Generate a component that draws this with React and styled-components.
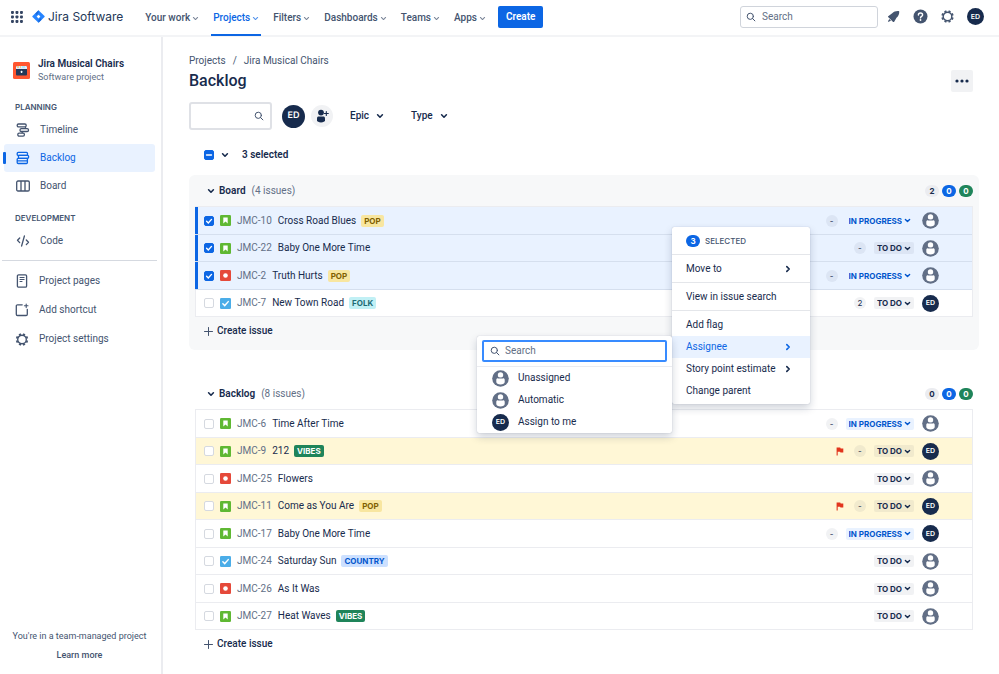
import React from 'react'
import styled, { createGlobalStyle } from 'styled-components'

const board = [
  { id: 'JMC-10', type: 'story', title: 'Cross Road Blues', epic: 'POP', points: '-', status: 'IN PROGRESS', selected: true },
  { id: 'JMC-22', type: 'story', title: 'Baby One More Time', points: '-', status: 'TO DO', selected: true },
  { id: 'JMC-2', type: 'bug', title: 'Truth Hurts', epic: 'POP', points: '-', status: 'IN PROGRESS', selected: true },
  { id: 'JMC-7', type: 'task', title: 'New Town Road', epic: 'FOLK', points: '2', status: 'TO DO', mine: true },
]

const backlog = [
  { id: 'JMC-6', type: 'story', title: 'Time After Time', points: '-', status: 'IN PROGRESS' },
  { id: 'JMC-9', type: 'story', title: '212', epic: 'VIBES', points: '-', status: 'TO DO', mine: true, flagged: true },
  { id: 'JMC-25', type: 'bug', title: 'Flowers', status: 'TO DO' },
  { id: 'JMC-11', type: 'story', title: 'Come as You Are', epic: 'POP', points: '-', status: 'TO DO', mine: true, flagged: true },
  { id: 'JMC-17', type: 'story', title: 'Baby One More Time', points: '-', status: 'IN PROGRESS', mine: true },
  { id: 'JMC-24', type: 'task', title: 'Saturday Sun', epic: 'COUNTRY', status: 'TO DO' },
  { id: 'JMC-26', type: 'bug', title: 'As It Was', status: 'TO DO' },
  { id: 'JMC-27', type: 'story', title: 'Heat Waves', epic: 'VIBES', status: 'TO DO' },
]

const epicColors = {
  POP: ['#f8e6a0', '#7f5f01'],
  FOLK: ['#c1f0f5', '#1d6b74'],
  VIBES: ['#1f845a', '#ffffff'],
  COUNTRY: ['#cce0ff', '#0055cc'],
}

/* ---------- icons ---------- */

const Chevron = ({ size = 8, width = 2, right }) => (
  <svg width={size} height={size} viewBox="0 0 10 10" fill="none" stroke="currentColor" strokeWidth={width} strokeLinecap="round" strokeLinejoin="round" aria-hidden="true">
    <path d={right ? 'M3.5 2 6.5 5 3.5 8' : 'M2 3.5 5 6.5 8 3.5'} />
  </svg>
)

const SearchIcon = () => (
  <svg width="10" height="10" viewBox="0 0 10 10" fill="none" stroke="#44546f" strokeWidth="1" strokeLinecap="round" aria-hidden="true">
    <circle cx="4.3" cy="4.3" r="3.1" />
    <path d="M6.6 6.6 8.9 8.9" />
  </svg>
)

const SwitcherIcon = () => (
  <svg width="12" height="12" viewBox="0 0 12 12" fill="#344563" aria-hidden="true">
    {[0, 4.5, 9].map((y) => [0, 4.5, 9].map((x) => <rect key={`${x}-${y}`} x={x} y={y} width="2.9" height="2.9" rx="0.8" />))}
  </svg>
)

const JiraLogo = () => (
  <svg width="13" height="13" viewBox="0 0 13 13" aria-hidden="true">
    <path d="M6.5.3 12.500 6.100c.3.300.3.600 0 .900L6.500 12.800.5 7c-.3-.3-.3-.6 0-.9z" fill="#2684ff" />
    <path d="M6.500.3v2.500L4.500 5 3.400 3.400z" fill="#1868db" />
    <path d="M6.500 12.800v-2.500l2-2.200 1.100 1.600z" fill="#1868db" />
    <path d="M6.500 4.700 8.400 6.500 6.500 8.400 4.600 6.500z" fill="#fff" />
  </svg>
)

const RocketIcon = () => (
  <svg width="13" height="13" viewBox="0 0 13 13" fill="#44546f" aria-hidden="true">
    <path d="M12.200 1.200C9.500.8 7 1.500 5.200 3.200L1.200 6.200c-.4.400-.2.900.2 1.100l4.700 4.600c.3.300.9.300 1.100-.2l2.300-4C11.500 6 12.500 3.800 12.200 1.200z" />
    <path d="M2.300 9 1 11.300c-.2.400.1.700.5.500L4 10.700z" />
  </svg>
)

const HelpIcon = () => (
  <svg width="15" height="15" viewBox="0 0 15 15" aria-hidden="true">
    <circle cx="7.500" cy="7.500" r="7" fill="#44546f" />
    <path d="M5.400 6c0-1.200.9-2 2.100-2s2.100.8 2.100 1.900c0 1.500-2.100 1.500-2.100 3" fill="none" stroke="#fff" strokeWidth="1.400" strokeLinecap="round" />
    <circle cx="7.500" cy="11" r="0.900" fill="#fff" />
  </svg>
)

const GearIcon = () => (
  <svg width="13" height="13" viewBox="0 0 13 13" fill="none" stroke="#44546f" aria-hidden="true">
    <circle cx="6.500" cy="6.500" r="4.300" strokeWidth="1.400" />
    {[22.5, 67.5, 112.5, 157.5, 202.5, 247.5, 292.5, 337.5].map((a) => (
      <path key={a} d="M6.500 0.300v1.700" strokeWidth="2.200" transform={`rotate(${a} 6.500 6.500)`} />
    ))}
  </svg>
)

const PersonIcon = () => (
  <svg width="17" height="17" viewBox="0 0 17 17" aria-hidden="true">
    <circle cx="8.500" cy="8.500" r="8.300" fill="#626f86" />
    <circle cx="8.500" cy="5" r="2.700" fill="#fff" />
    <path d="M4.300 9.800c0-.9.600-1.500 1.500-1.500h5.400c.9 0 1.500.6 1.500 1.500v2.100c0 1.400-1.800 2.500-4.200 2.500s-4.200-1.100-4.200-2.500z" fill="#fff" />
    <path d="M5.800 8h5.400" stroke="#626f86" strokeWidth="0.700" />
  </svg>
)

const AddPersonIcon = () => (
  <svg width="14" height="14" viewBox="0 0 14 14" fill="#172b4d" aria-hidden="true">
    <circle cx="6" cy="3.600" r="2.900" />
    <path d="M2 9.200c0-1 .7-1.700 1.700-1.700h4.600c1 0 1.700.7 1.700 1.700v2c0 1.300-1.800 2.200-4 2.200s-4-.9-4-2.200z" />
    <path d="M11.300 2.500v4M9.300 4.500h4" stroke="#172b4d" strokeWidth="1.100" strokeLinecap="round" />
  </svg>
)

const ProjectIcon = () => (
  <svg width="17" height="17" viewBox="0 0 17 17" aria-hidden="true">
    <rect width="17" height="17" rx="1.500" fill="#ff5630" />
    <rect x="3" y="4" width="11" height="9.500" rx="1" fill="#253858" />
    <path d="M4 4h9a1 1 0 0 1 1 1v2H3V5a1 1 0 0 1 1-1z" fill="#deebff" />
    <path d="M4 5h2M7 5h1" stroke="#ffab00" strokeWidth="0.900" />
    <path d="M9 5h3" stroke="#79e2f2" strokeWidth="0.900" />
    <rect x="7.800" y="8.800" width="1.500" height="2.200" rx="0.500" fill="#fff" />
  </svg>
)

const TimelineIcon = () => (
  <svg width="14" height="14" viewBox="0 0 14 14" fill="none" stroke="currentColor" strokeWidth="1.300" aria-hidden="true">
    <rect x="1.200" y="1" width="9" height="2.900" rx="1.300" />
    <rect x="4" y="5.600" width="8.500" height="2.900" rx="1.300" />
    <rect x="1.800" y="10.200" width="6.600" height="2.900" rx="1.300" />
    <path d="M9.500 3.900v1.700M6.200 8.500v1.700" />
  </svg>
)

const BacklogIcon = () => (
  <svg width="14" height="14" viewBox="0 0 14 14" fill="none" stroke="currentColor" strokeWidth="1.300" aria-hidden="true">
    <rect x="1.200" y="1.400" width="10.300" height="3" rx="1" />
    <rect x="2.400" y="4.400" width="10.200" height="2.900" rx="1" />
    <path d="M2.200 7.300h9.200v4.200a1 1 0 0 1-1 1H2.200a1 1 0 0 1-1-1V8.300a1 1 0 0 1 1-1zM1.200 9.900h10.200" />
  </svg>
)

const BoardIcon = () => (
  <svg width="14" height="14" viewBox="0 0 14 14" fill="none" stroke="currentColor" strokeWidth="1.300" aria-hidden="true">
    <rect x="0.700" y="2" width="12.600" height="10" rx="1.300" />
    <path d="M5 2v10M9 2v10" />
  </svg>
)

const CodeIcon = () => (
  <svg width="14" height="14" viewBox="0 0 14 14" fill="none" stroke="currentColor" strokeWidth="1.300" strokeLinecap="round" strokeLinejoin="round" aria-hidden="true">
    <path d="M3.700 4 1.500 6.300l2.200 2.300M10.300 6l2.200 2.300-2.200 2.300M8.400 2 5.600 12" />
  </svg>
)

const PageIcon = () => (
  <svg width="14" height="14" viewBox="0 0 14 14" fill="none" stroke="currentColor" strokeWidth="1.300" aria-hidden="true">
    <rect x="2.400" y="0.800" width="9.200" height="12.400" rx="1.200" />
    <path d="M4.600 3.500h4.900M4.600 5.500h4.900M4.600 7.500h2.800" strokeWidth="1.100" />
  </svg>
)

const ShortcutIcon = () => (
  <svg width="14" height="14" viewBox="0 0 14 14" fill="none" stroke="currentColor" strokeWidth="1.300" strokeLinecap="round" aria-hidden="true">
    <path d="M7.200 1.800H2.500a1.200 1.200 0 0 0-1.200 1.200v8.300a1.200 1.200 0 0 0 1.200 1.200h8.600a1.200 1.200 0 0 0 1.200-1.200V6.500" />
    <path d="M11.200 1v3.600M9.400 2.800H13" strokeWidth="1.100" />
  </svg>
)

const FlagIcon = () => (
  <svg width="8" height="9" viewBox="0 0 8 9" fill="#e2351d" aria-hidden="true">
    <path d="M.6.600h3.600l.5.800h2.600v4.200H4.500l-.5-.8H1.700v3.700H.6z" />
  </svg>
)

const PlusIcon = () => (
  <svg width="9" height="9" viewBox="0 0 9 9" stroke="#44546f" strokeWidth="1" strokeLinecap="round" aria-hidden="true">
    <path d="M4.500.5v8M.5 4.500h8" />
  </svg>
)

const DotsIcon = () => (
  <svg width="14" height="4" viewBox="0 0 14 4" fill="#172b4d" aria-hidden="true">
    <circle cx="2" cy="2" r="1.600" />
    <circle cx="7" cy="2" r="1.600" />
    <circle cx="12" cy="2" r="1.600" />
  </svg>
)

const TypeIcon = ({ type }) => (
  <svg width="11" height="11" viewBox="0 0 10 10" role="img" aria-label={type}>
    {type === 'story' && (
      <>
        <rect width="10" height="10" rx="1.200" fill="#5fb833" />
        <path d="M3 2.200h4v5.600L5 6 3 7.800z" fill="#fff" />
      </>
    )}
    {type === 'bug' && (
      <>
        <rect width="10" height="10" rx="1.200" fill="#e5493a" />
        <circle cx="5" cy="5" r="2.100" fill="#fff" />
      </>
    )}
    {type === 'task' && (
      <>
        <rect width="10" height="10" rx="1.200" fill="#4bade8" />
        <path d="M2.600 5.200 4.300 6.900 7.500 3.300" fill="none" stroke="#fff" strokeWidth="1.300" strokeLinecap="round" />
      </>
    )}
  </svg>
)

/* ---------- components ---------- */

const Assignee = ({ mine }) => (mine ? <Initials>ED</Initials> : <PersonIcon />)

const Issue = ({ issue }) => (
  <Row $selected={issue.selected} $flagged={issue.flagged}>
    <Checkbox type="checkbox" defaultChecked={issue.selected} aria-label={`Select ${issue.id}`} />
    <TypeIcon type={issue.type} />
    <IssueKey href="#">{issue.id}</IssueKey>
    <Summary>{issue.title}</Summary>
    {issue.epic && <Epic $colors={epicColors[issue.epic]}>{issue.epic}</Epic>}
    <RowEnd>
      {issue.flagged && <Flag><FlagIcon /></Flag>}
      {issue.points && <Points>{issue.points}</Points>}
      <StatusBox $progress={issue.status === 'IN PROGRESS'}>
        <StatusSelect defaultValue={issue.status} aria-label={`Status of ${issue.id}`}>
          <option>TO DO</option>
          <option>IN PROGRESS</option>
          <option>DONE</option>
        </StatusSelect>
        <Chevron size={7} />
      </StatusBox>
      <Assignee mine={issue.mine} />
    </RowEnd>
  </Row>
)

const IssueSection = ({ title, issues, total, filled, children }) => (
  <Section $filled={filled}>
    <SectionHead>
      <Chevron />
      <h2>{title}</h2>
      <span>({issues.length} issues)</span>
      <Counts>
        <Count>{total}</Count>
        <Count $color="#0c66e4">0</Count>
        <Count $color="#1f845a">0</Count>
      </Counts>
    </SectionHead>
    <List>
      {issues.map((issue) => (
        <Issue key={issue.id} issue={issue} />
      ))}
    </List>
    <CreateIssue>
      <PlusIcon />
      Create issue
    </CreateIssue>
    {children}
  </Section>
)

const BulkMenu = () => (
  <Menu>
    <MenuHead>
      <Count $color="#0c66e4">3</Count>
      SELECTED
    </MenuHead>
    <MenuGroup>
      <MenuItem>Move to <Chevron right /></MenuItem>
    </MenuGroup>
    <MenuGroup>
      <MenuItem>View in issue search</MenuItem>
    </MenuGroup>
    <MenuGroup>
      <MenuItem>Add flag</MenuItem>
      <SubmenuAnchor>
        <MenuItem $active>Assignee <Chevron right /></MenuItem>
        <Submenu>
          <SubmenuSearch>
            <SearchIcon />
            <input type="text" placeholder="Search" aria-label="Search assignee" />
          </SubmenuSearch>
          <People>
            <Person><PersonIcon />Unassigned</Person>
            <Person><PersonIcon />Automatic</Person>
            <Person><Initials>ED</Initials>Assign to me</Person>
          </People>
        </Submenu>
      </SubmenuAnchor>
      <MenuItem>Story point estimate <Chevron right /></MenuItem>
      <MenuItem>Change parent</MenuItem>
    </MenuGroup>
  </Menu>
)

const App = () => {
  return (
    <Page>
      <GlobalStyle />
      <TopBar>
        <IconButton aria-label="Switch to"><SwitcherIcon /></IconButton>
        <Brand href="#">
          <JiraLogo />
          Jira Software
        </Brand>
        <Nav>
          {['Your work', 'Projects', 'Filters', 'Dashboards', 'Teams', 'Apps'].map((name) => (
            <NavButton key={name} $active={name === 'Projects'}>
              {name}
              <Chevron size={7} width={1.5} />
            </NavButton>
          ))}
        </Nav>
        <CreateButton>Create</CreateButton>
        <TopEnd>
          <TopSearch>
            <SearchIcon />
            <input type="text" placeholder="Search" aria-label="Search" />
          </TopSearch>
          <IconButton aria-label="Notifications"><RocketIcon /></IconButton>
          <IconButton aria-label="Help"><HelpIcon /></IconButton>
          <IconButton aria-label="Settings"><GearIcon /></IconButton>
          <Initials>ED</Initials>
        </TopEnd>
      </TopBar>
      <Body>
        <Sidebar>
          <Project>
            <ProjectIcon />
            <div>
              <ProjectName>Jira Musical Chairs</ProjectName>
              <ProjectKind>Software project</ProjectKind>
            </div>
          </Project>
          <GroupTitle>PLANNING</GroupTitle>
          <SideLink href="#"><TimelineIcon />Timeline</SideLink>
          <SideLink href="#" $active><BacklogIcon />Backlog</SideLink>
          <SideLink href="#"><BoardIcon />Board</SideLink>
          <GroupTitle>DEVELOPMENT</GroupTitle>
          <SideLink href="#"><CodeIcon />Code</SideLink>
          <Extras>
            <SideLink href="#"><PageIcon />Project pages</SideLink>
            <SideLink href="#"><ShortcutIcon />Add shortcut</SideLink>
            <SideLink href="#"><GearIcon />Project settings</SideLink>
          </Extras>
          <SideFooter>
            <p>You're in a team-managed project</p>
            <a href="#">Learn more</a>
          </SideFooter>
        </Sidebar>
        <Main>
          <PageHead>
            <div>
              <Breadcrumbs>
                <a href="#">Projects</a>
                <span>/</span>
                <a href="#">Jira Musical Chairs</a>
              </Breadcrumbs>
              <Title>Backlog</Title>
            </div>
            <MoreButton aria-label="More actions"><DotsIcon /></MoreButton>
          </PageHead>
          <Filters>
            <FilterSearch>
              <input type="text" aria-label="Search backlog" />
              <SearchIcon />
            </FilterSearch>
            <Initials $large>ED</Initials>
            <AddPeople aria-label="Add people"><AddPersonIcon /></AddPeople>
            <FilterButton aria-haspopup="true">Epic <Chevron /></FilterButton>
            <FilterButton aria-haspopup="true">Type <Chevron /></FilterButton>
          </Filters>
          <Selection>
            <Checkbox type="checkbox" $mixed aria-label="Select all issues" />
            <Chevron />
            3 selected
          </Selection>
          <IssueSection title="Board" issues={board} total={2} filled>
            <BulkMenu />
          </IssueSection>
          <IssueSection title="Backlog" issues={backlog} total={0} />
        </Main>
      </Body>
    </Page>
  )
}

/* ---------- styles ---------- */

const labelFont = 'Inter, "Liberation Sans", sans-serif'

const GlobalStyle = createGlobalStyle`
  * {
    box-sizing: border-box;
    margin: 0;
    padding: 0;
  }
  body {
    background: #ffffff;
    color: #172b4d;
    font: 400 10px/14px Roboto, "Liberation Sans", sans-serif;
  }
  button, input, select {
    font: inherit;
    color: inherit;
    border: none;
    background: none;
  }
  button {
    cursor: pointer;
  }
  a {
    color: inherit;
    text-decoration: none;
  }
  svg {
    display: block;
    flex-shrink: 0;
  }
`;

const Page = styled.div`
  display: flex;
  flex-direction: column;
  min-height: 100vh;
`;

const TopBar = styled.header`
  display: flex;
  align-items: center;
  height: 37px;
  padding: 0 15px 2px 11px;
  border-bottom: 2px solid #f3f4f6;
`;

const IconButton = styled.button`
  display: flex;
  align-items: center;
  justify-content: center;
`;

const Brand = styled.a`
  display: flex;
  align-items: center;
  gap: 3px;
  margin-left: 9px;
  color: #253858;
  font-family: ${labelFont};
  font-size: 12px;
`;

const Nav = styled.nav`
  display: flex;
  gap: 10px;
  margin-left: 20px;
  align-self: stretch;
`;

const NavButton = styled.button`
  display: flex;
  align-items: center;
  gap: 2px;
  padding: 2px 2px 0;
  margin-bottom: -3px;
  border-bottom: 2px solid ${(p) => (p.$active ? '#0c66e4' : 'transparent')};
  color: ${(p) => (p.$active ? '#0c66e4' : '#44546f')};
  font-weight: 500;
  svg {
    opacity: 0.7;
  }
`;

const CreateButton = styled.button`
  height: 22px;
  margin-left: 10px;
  padding: 0 8px;
  border-radius: 2px;
  background: #0c66e4;
  color: #ffffff;
  font-weight: 600;
`;

const TopEnd = styled.div`
  display: flex;
  align-items: center;
  gap: 13px;
  margin-left: auto;
`;

const TopSearch = styled.label`
  display: flex;
  align-items: center;
  gap: 6px;
  width: 138px;
  height: 22px;
  padding: 0 5px;
  margin-right: -4px;
  border: 1px solid #d0d4db;
  border-radius: 3px;
  input {
    flex: 1;
    min-width: 0;
    outline: none;
  }
  input::placeholder {
    color: #626f86;
    opacity: 1;
  }
`;

const Initials = styled.span`
  display: flex;
  align-items: center;
  justify-content: center;
  flex-shrink: 0;
  width: ${(p) => (p.$large ? 23 : 17)}px;
  height: ${(p) => (p.$large ? 23 : 17)}px;
  border-radius: 50%;
  background: #172b4d;
  color: #ffffff;
  font-family: ${labelFont};
  font-size: ${(p) => (p.$large ? 9 : 7)}px;
  font-weight: 600;
  text-rendering: geometricPrecision;
`;

const Body = styled.div`
  display: flex;
  flex: 1;
`;

const Sidebar = styled.aside`
  display: flex;
  flex-direction: column;
  flex-shrink: 0;
  width: 163px;
  padding: 20px 6px 16px 4px;
  border-right: 2px solid #ebecf0;
  color: #44546f;
`;

const Project = styled.div`
  display: flex;
  align-items: center;
  gap: 8px;
  padding-left: 9px;
  margin-bottom: 18px;
`;

const ProjectName = styled.p`
  color: #172b4d;
  font-weight: 600;
`;

const ProjectKind = styled.p`
  color: #626f86;
  font-size: 9px;
  line-height: 13px;
`;

const GroupTitle = styled.h3`
  padding-left: 11px;
  margin-bottom: 9px;
  font-family: ${labelFont};
  font-size: 8px;
  line-height: 10px;
  font-weight: 600;
  a + & {
    margin-top: 13px;
  }
`;

const SideLink = styled.a`
  display: flex;
  align-items: center;
  gap: 10px;
  height: 28px;
  padding-left: 12px;
  border-radius: 3px;
  position: relative;
  background: ${(p) => (p.$active ? '#e9f2ff' : 'none')};
  color: ${(p) => (p.$active ? '#0c66e4' : '#44546f')};
  svg {
    width: 14px;
  }
  ${GroupTitle} + & {
    margin-top: -5px;
  }
  &::before {
    content: "";
    display: ${(p) => (p.$active ? 'block' : 'none')};
    position: absolute;
    left: -1px;
    top: 8px;
    bottom: 8px;
    width: 3px;
    border-radius: 1px;
    background: #0c66e4;
  }
`;

const Extras = styled.div`
  display: grid;
  gap: 1px;
  margin: 5px -2px 0 -2px;
  padding-top: 6px;
  border-top: 1px solid #d5d9e0;
  ${SideLink} {
    padding-left: 13px;
  }
`;

const SideFooter = styled.footer`
  display: grid;
  gap: 5px;
  margin-top: auto;
  text-align: center;
  font-size: 9px;
  line-height: 14px;
  a {
    font-weight: 500;
  }
`;

const Main = styled.main`
  flex: 1;
  min-width: 0;
  padding: 17px 20px 15px 26px;
`;

const PageHead = styled.div`
  display: flex;
  justify-content: space-between;
  align-items: flex-end;
  padding-right: 6px;
`;

const Breadcrumbs = styled.nav`
  display: flex;
  gap: 7px;
  color: #44546f;
`;

const Title = styled.h1`
  margin-top: 2px;
  font-size: 16px;
  line-height: 22px;
  font-weight: 500;
`;

const MoreButton = styled.button`
  display: flex;
  align-items: center;
  justify-content: center;
  width: 22px;
  height: 22px;
  border-radius: 2px;
  background: #f1f2f4;
`;

const Filters = styled.div`
  display: flex;
  align-items: center;
  margin-top: 10px;
`;

const FilterSearch = styled.label`
  display: flex;
  align-items: center;
  width: 83px;
  height: 28px;
  padding: 0 6px;
  margin-right: 10px;
  border: 2px solid #dfe1e6;
  border-radius: 3px;
  input {
    flex: 1;
    min-width: 0;
    outline: none;
  }
`;

const AddPeople = styled.button`
  display: flex;
  align-items: center;
  justify-content: center;
  width: 22px;
  height: 22px;
  margin: 0 9px 0 6px;
  border-radius: 50%;
  background: #f1f2f4;
`;

const FilterButton = styled.button`
  display: flex;
  align-items: center;
  gap: 7px;
  padding: 0 8px;
  margin-right: 11px;
  font-weight: 500;
`;

const Selection = styled.div`
  display: flex;
  align-items: center;
  height: 20px;
  margin: 15px 0 10px;
  padding-left: 15px;
  font-weight: 600;
  svg {
    margin: 0 13px 0 7px;
  }
`;

const tick = `url("data:image/svg+xml,%3Csvg xmlns='http://www.w3.org/2000/svg' viewBox='0 0 10 10'%3E%3Cpath d='M2.600 5.200 4.300 6.900 7.500 3.400' fill='none' stroke='white' stroke-width='1.400' stroke-linecap='round'/%3E%3C/svg%3E")`
const dash = `url("data:image/svg+xml,%3Csvg xmlns='http://www.w3.org/2000/svg' viewBox='0 0 10 10'%3E%3Cpath d='M2.500 5h5' stroke='white' stroke-width='1.400' stroke-linecap='round'/%3E%3C/svg%3E")`

const Checkbox = styled.input`
  appearance: none;
  flex-shrink: 0;
  width: 10px;
  height: 10px;
  border: 1px solid ${(p) => (p.$mixed ? '#0c66e4' : '#d5d9e0')};
  border-radius: 2px;
  background: ${(p) => (p.$mixed ? `${dash} center / 10px #0c66e4` : '#ffffff')};
  &:checked {
    border-color: #0c66e4;
    background: ${tick} center / 10px #0c66e4;
  }
`;

const Section = styled.section`
  position: relative;
  padding: 0 6px 5px;
  border-radius: 6px;
  background: ${(p) => (p.$filled ? '#f7f8f9' : 'none')};
  & + & {
    margin-top: 28px;
  }
`;

const SectionHead = styled.div`
  display: flex;
  align-items: center;
  height: 31px;
  padding-left: 12px;
  color: #626f86;
  svg {
    color: #172b4d;
  }
  h2 {
    margin: 0 6px 0 4px;
    color: #172b4d;
    font-size: 10px;
    font-weight: 600;
  }
`;

const Counts = styled.div`
  display: flex;
  gap: 3px;
  margin-left: auto;
`;

const Count = styled.span`
  min-width: 14px;
  border-radius: 6px;
  background: ${(p) => p.$color || '#ebecf0'};
  color: ${(p) => (p.$color ? '#ffffff' : '#172b4d')};
  font-family: ${labelFont};
  font-size: 8px;
  line-height: 12px;
  font-weight: 700;
  text-align: center;
`;

const List = styled.ul`
  list-style: none;
  border: 1px solid #ebecf0;
  border-bottom: none;
`;

const Row = styled.li`
  display: flex;
  align-items: center;
  height: 28px;
  padding: 0 33px 0 8px;
  margin-left: -1px;
  border-bottom: 1px solid ${(p) => (p.$selected ? '#d5dfee' : '#ebecf0')};
  background: ${(p) => (p.$selected ? '#e9f2ff' : p.$flagged ? '#fff7d6' : '#ffffff')};
  box-shadow: inset ${(p) => (p.$selected ? '3px 0 #0c66e4' : '1px 0 #ebecf0')};
  &:nth-child(even) {
    height: 27px;
  }
  ${Checkbox} {
    margin: 0 6px 0 1px;
  }
`;

const IssueKey = styled.a`
  margin-left: 6px;
  color: #626f86;
`;

const Summary = styled.span`
  margin: 0 5px 0 6px;
`;

const Epic = styled.span`
  padding: 0 3px;
  border-radius: 2px;
  background: ${(p) => p.$colors[0]};
  color: ${(p) => p.$colors[1]};
  font-family: ${labelFont};
  font-size: 8px;
  line-height: 12px;
  font-weight: 700;
`;

const RowEnd = styled.div`
  display: flex;
  align-items: center;
  gap: 8px;
  margin-left: auto;
`;

const Flag = styled.span`
  margin-right: 2px;
`;

const Points = styled.span`
  min-width: 12px;
  border-radius: 6px;
  background: rgba(9, 30, 66, 0.06);
  font-family: ${labelFont};
  font-size: 8px;
  line-height: 12px;
  text-align: center;
`;

const StatusBox = styled.span`
  display: flex;
  align-items: center;
  padding-right: 3px;
  border-radius: 2px;
  background: ${(p) => (p.$progress ? '#e9f2ff' : 'rgba(9, 30, 66, 0.06)')};
  color: ${(p) => (p.$progress ? '#0055cc' : '#172b4d')};
  svg {
    margin-left: -7px;
    pointer-events: none;
  }
`;

const StatusSelect = styled.select`
  appearance: none;
  field-sizing: content;
  height: 12px;
  padding: 0 9px 0 3px;
  font-family: ${labelFont};
  font-size: 8px;
  line-height: 12px;
  font-weight: 700;
`;

const CreateIssue = styled.button`
  display: flex;
  align-items: center;
  gap: 4px;
  height: 28px;
  padding-left: 9px;
  font-weight: 500;
`;

const Menu = styled.div`
  position: absolute;
  top: 52px;
  right: 169px;
  z-index: 1;
  width: 138px;
  border-radius: 2px;
  background: #ffffff;
  box-shadow: 0 4px 8px rgba(9, 30, 66, 0.2), 0 0 1px rgba(9, 30, 66, 0.3);
`;

const MenuHead = styled.div`
  display: flex;
  align-items: center;
  gap: 5px;
  height: 27px;
  padding-left: 14px;
  color: #44546f;
  font-family: ${labelFont};
  font-size: 8px;
  font-weight: 500;
`;

const MenuGroup = styled.div`
  padding: 3px 0 2px;
  border-top: 1px solid #e4e6ea;
`;

const MenuItem = styled.button`
  display: flex;
  align-items: center;
  justify-content: space-between;
  width: 100%;
  height: 22px;
  padding: 0 18px 0 14px;
  background: ${(p) => (p.$active ? '#e9f2ff' : 'none')};
  color: ${(p) => (p.$active ? '#0c66e4' : '#172b4d')};
`;

const SubmenuAnchor = styled.div`
  position: relative;
`;

const Submenu = styled.div`
  position: absolute;
  top: 0;
  right: 100%;
  width: 195px;
  border-radius: 2px;
  background: #ffffff;
  box-shadow: 0 4px 8px rgba(9, 30, 66, 0.2), 0 0 1px rgba(9, 30, 66, 0.3);
`;

const SubmenuSearch = styled.label`
  display: flex;
  align-items: center;
  gap: 5px;
  height: 22px;
  margin: 4px 5px;
  padding: 0 6px;
  border: 2px solid #388bff;
  border-radius: 2px;
  input {
    flex: 1;
    min-width: 0;
    outline: none;
  }
  input::placeholder {
    color: #626f86;
    opacity: 1;
  }
`;

const People = styled.div`
  border-top: 1px solid #ebecf0;
`;

const Person = styled.button`
  display: flex;
  align-items: center;
  gap: 9px;
  width: 100%;
  height: 22px;
  padding-left: 15px;
`;

export default App
